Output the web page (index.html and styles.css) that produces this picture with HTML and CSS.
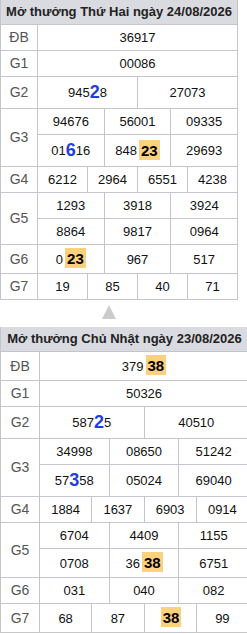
FILE: index.html
```html
<!DOCTYPE html>
<html lang="vi">
<head>
<meta charset="utf-8">
<link rel="stylesheet" href="styles.css">
</head>
<body>
<div class="kq kq-a">
  <div class="hd">Mở thưởng Thứ Hai ngày 24/08/2026</div>
  <div class="lb">ĐB</div><div class="c c12">36917</div>
  <div class="lb">G1</div><div class="c c12">00086</div>
  <div class="lb">G2</div><div class="c c6">945<b class="big">2</b>8</div><div class="c c6">27073</div>
  <div class="lb r2">G3</div><div class="c c4">94676</div><div class="c c4">56001</div><div class="c c4">09335</div>
  <div class="c c4">01<b class="big">6</b>16</div><div class="c c4">848<b class="hl">23</b></div><div class="c c4">29693</div>
  <div class="lb">G4</div><div class="c c3">6212</div><div class="c c3">2964</div><div class="c c3">6551</div><div class="c c3">4238</div>
  <div class="lb r2">G5</div><div class="c c4">1293</div><div class="c c4">3918</div><div class="c c4">3924</div>
  <div class="c c4">8864</div><div class="c c4">9817</div><div class="c c4">0964</div>
  <div class="lb">G6</div><div class="c c4">0<b class="hl">23</b></div><div class="c c4">967</div><div class="c c4">517</div>
  <div class="lb">G7</div><div class="c c3">19</div><div class="c c3">85</div><div class="c c3">40</div><div class="c c3">71</div>
</div>
<div class="arrow"></div>
<div class="kq kq-b">
  <div class="hd">Mở thưởng Chủ Nhật ngày 23/08/2026</div>
  <div class="lb">ĐB</div><div class="c c12">379<b class="hl">38</b></div>
  <div class="lb">G1</div><div class="c c12">50326</div>
  <div class="lb">G2</div><div class="c c6">587<b class="big">2</b>5</div><div class="c c6">40510</div>
  <div class="lb r2">G3</div><div class="c c4">34998</div><div class="c c4">08650</div><div class="c c4">51242</div>
  <div class="c c4">57<b class="big">3</b>58</div><div class="c c4">05024</div><div class="c c4">69040</div>
  <div class="lb">G4</div><div class="c c3">1884</div><div class="c c3">1637</div><div class="c c3">6903</div><div class="c c3">0914</div>
  <div class="lb r2">G5</div><div class="c c4">6704</div><div class="c c4">4409</div><div class="c c4">1155</div>
  <div class="c c4">0708</div><div class="c c4">36<b class="hl">38</b></div><div class="c c4">6751</div>
  <div class="lb">G6</div><div class="c c4">031</div><div class="c c4">040</div><div class="c c4">082</div>
  <div class="lb">G7</div><div class="c c3">68</div><div class="c c3">87</div><div class="c c3"><b class="hl">38</b></div><div class="c c3">99</div>
</div>
</body>
</html>
```
FILE: styles.css
```css
html, body {
  margin: 0;
  padding: 0;
  background: #fff;
  overflow-x: hidden;
}
body {
  font-family: "Liberation Sans", Arial, sans-serif;
  font-size: 13px;
  color: #111;
}
.kq {
  display: grid;
  gap: 1px;
  background: #c4c4cc;
  border: 1px solid #c4c4cc;
}
.kq-a {
  width: 236px;
  grid-template-columns: 36px repeat(12, 1fr);
}
.kq-b {
  width: 247px;
  grid-template-columns: 38px repeat(12, 1fr);
}
.hd {
  grid-column: 1 / -1;
  background: #dadbe0;
  font-weight: bold;
  font-size: 13px;
  color: #222;
  text-align: center;
  white-space: nowrap;
  height: 24px;
  line-height: 24px;
  margin-top: -1px;
}
.lb, .c {
  background: #fff;
  display: flex;
  align-items: center;
  justify-content: center;
  padding: 5px 0;
  line-height: 15px;
}
.lb {
  color: #555;
  font-size: 14px;
}
.r2 { grid-row: span 2; }
.c12 { grid-column: span 12; }
.c6 { grid-column: span 6; }
.c4 { grid-column: span 4; }
.c3 { grid-column: span 3; }
.c {
  white-space: pre;
}
.big {
  color: #1f3ee0;
  font-size: 18px;
  line-height: 21px;
}
.hl {
  display: inline-block;
  background: #fbd17e;
  color: #000;
  font-size: 15px;
  line-height: 17px;
  padding: 2px 2px 1px;
  margin: -2px 0 0 2px;
}
.arrow {
  width: 0;
  height: 0;
  border-left: 7px solid transparent;
  border-right: 7px solid transparent;
  border-bottom: 14px solid #cbcbcb;
  margin: 5px 0 8px 102px;
}
```
